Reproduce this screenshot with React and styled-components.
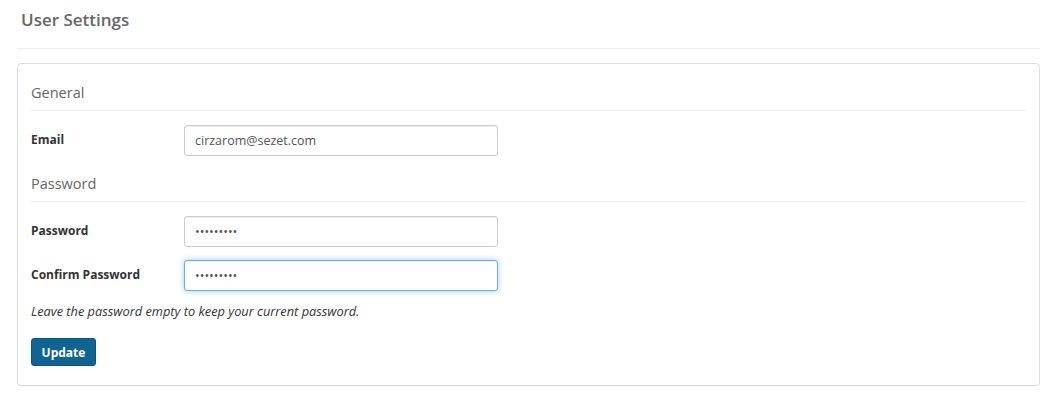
import React from "react";
import styled, { createGlobalStyle } from "styled-components";

const GlobalStyle = createGlobalStyle`
  body {
    margin: 0;
    background: #fff;
    font-family: "Open Sans", "Noto Sans", sans-serif;
    color: #333;
  }
`;

function App() {
  return (
    <Page>
      <GlobalStyle />
      <PageTitle>User Settings</PageTitle>
      <Divider />
      <Panel>
        <SectionTitle>General</SectionTitle>
        <FieldRow>
          <Label htmlFor="email">Email</Label>
          <TextInput id="email" type="text" defaultValue="cirzarom@sezet.com" />
        </FieldRow>
        <SectionTitle>Password</SectionTitle>
        <FieldRow>
          <Label htmlFor="password">Password</Label>
          <TextInput id="password" type="password" defaultValue="123456789" />
        </FieldRow>
        <FieldRow $last>
          <Label htmlFor="confirm">Confirm Password</Label>
          <TextInput
            id="confirm"
            type="password"
            defaultValue="123456789"
            $focused
          />
        </FieldRow>
        <HelpText>Leave the password empty to keep your current password.</HelpText>
        <UpdateButton type="button">Update</UpdateButton>
      </Panel>
    </Page>
  );
}

const Page = styled.div`
  padding: 0 13px 0 17px;
`;

const PageTitle = styled.h1`
  margin: 0;
  padding: 10px 0 0 4px;
  height: 48px;
  box-sizing: border-box;
  font-size: 17px;
  font-weight: 600;
  color: #666;
  line-height: 20px;
`;

const Divider = styled.hr`
  margin: 0 0 14px;
  border: 0;
  border-top: 1px solid #eee;
  height: 0;
`;

const Panel = styled.div`
  border: 1px solid #ddd;
  border-radius: 4px;
  padding: 14px 13px 19px 13px;
  box-shadow: 0 1px 1px rgba(0, 0, 0, 0.05);
`;

const SectionTitle = styled.h3`
  margin: 0 0 14px;
  padding: 5px 0 7px;
  border-bottom: 1px solid #eee;
  font-size: 14.5px;
  font-weight: 400;
  line-height: 20px;
  color: #666;
`;

const FieldRow = styled.div`
  display: flex;
  align-items: center;
  margin-bottom: ${(p) => (p.$last ? "11px" : "13px")};
`;

const Label = styled.label`
  width: 153px;
  padding-bottom: 2px;
  font-size: 12px;
  font-weight: 700;
  color: #333;
`;

const TextInput = styled.input`
  width: 314px;
  height: 31px;
  box-sizing: border-box;
  padding: 4px 10px;
  font-family: "Open Sans", "Noto Sans", sans-serif;
  font-size: 12.5px;
  color: #555;
  background: #fff;
  border: 1px solid ${(p) => (p.$focused ? "#66afe9" : "#ccc")};
  border-radius: 3px;
  box-shadow: ${(p) =>
    p.$focused
      ? "inset 0 1px 1px rgba(0,0,0,.075), 0 0 6px rgba(102,175,233,.6)"
      : "inset 0 1px 1px rgba(0,0,0,.075)"};
  outline: none;
`;

const HelpText = styled.p`
  margin: 0 0 18px;
  font-size: 12.8px;
  font-style: italic;
  color: #333;
`;

const UpdateButton = styled.button`
  display: block;
  width: 65px;
  height: 28px;
  padding: 0;
  font-family: "Open Sans", "Noto Sans", sans-serif;
  font-size: 12px;
  font-weight: 700;
  color: #fff;
  background: #0f6491;
  border: 1px solid #0b5680;
  border-radius: 3px;
`;

export default App;
